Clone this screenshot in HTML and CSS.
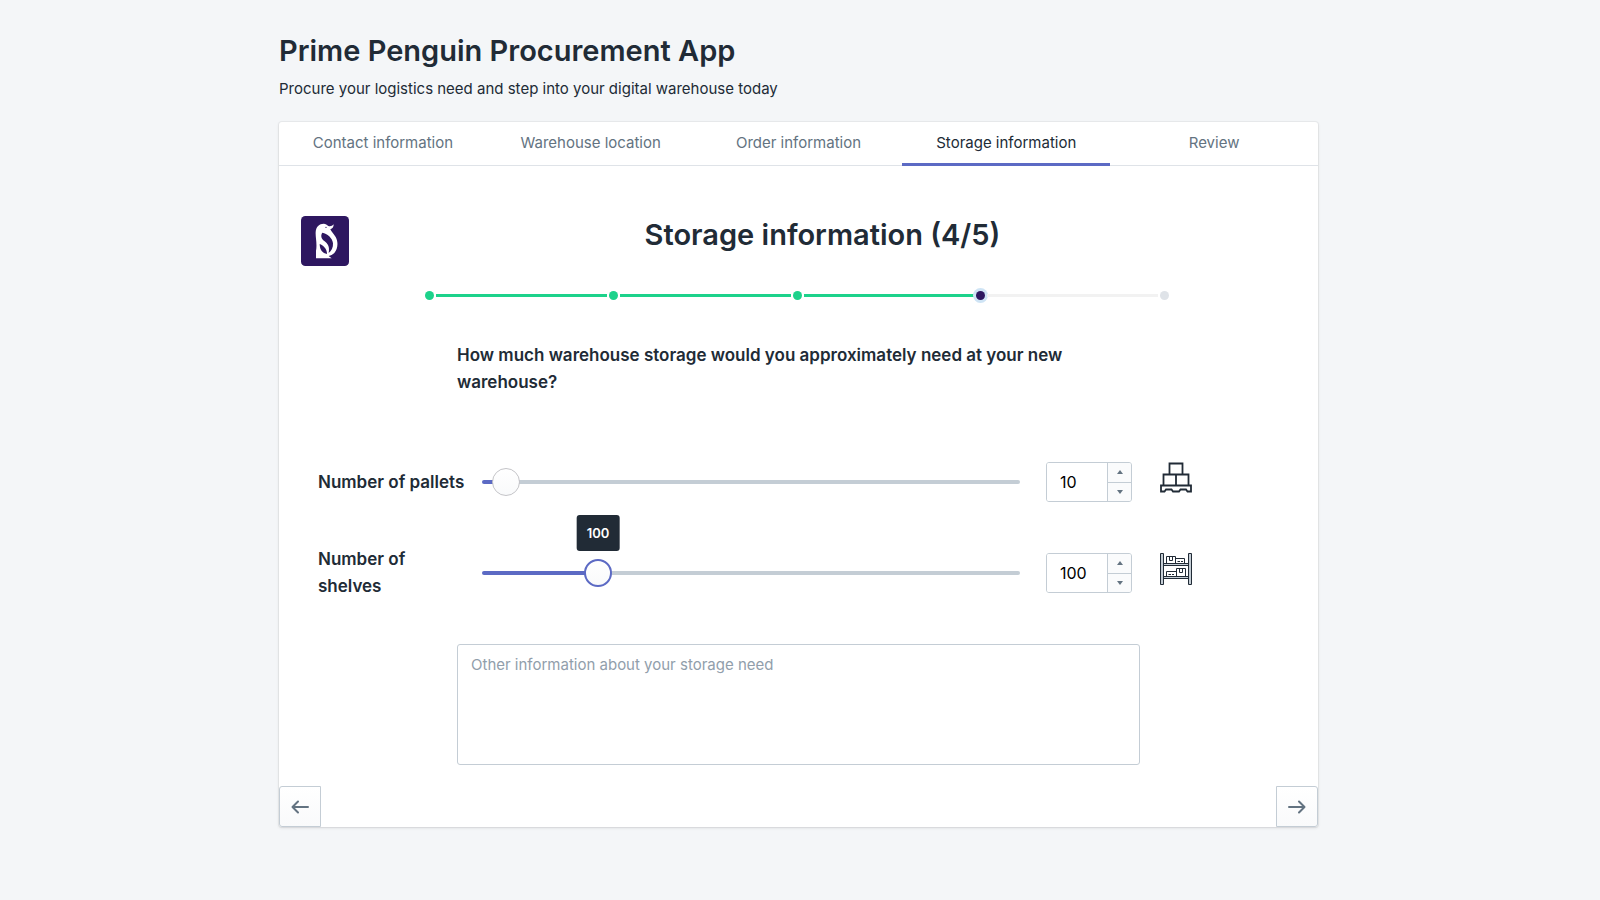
FILE: index.html
```html
<!DOCTYPE html>
<html lang="en">
<head>
<meta charset="utf-8">
<meta name="viewport" content="width=device-width, initial-scale=1">
<title>Prime Penguin Procurement App</title>
<link rel="stylesheet" href="styles.css">
</head>
<body>
<main class="page">
  <header class="page-header">
    <h1 class="page-title">Prime Penguin Procurement App</h1>
    <p class="page-subtitle">Procure your logistics need and step into your digital warehouse today</p>
  </header>

  <section class="card">
    <div class="tabs" role="tablist">
      <button class="tab" type="button" role="tab" aria-selected="false">Contact information</button>
      <button class="tab" type="button" role="tab" aria-selected="false">Warehouse location</button>
      <button class="tab" type="button" role="tab" aria-selected="false">Order information</button>
      <button class="tab tab-active" type="button" role="tab" aria-selected="true">Storage information</button>
      <button class="tab" type="button" role="tab" aria-selected="false">Review</button>
    </div>

    <form class="panel">
      <div class="panel-head">
        <svg class="logo" viewBox="0 0 144 150" aria-hidden="true">
          <rect width="144" height="150" rx="13" fill="#2e1760"/>
          <path fill="#fff" d="M45 127V105C49 82 43 64 44 48C45 32 55 23 68 23C74 23 78 26 82 30C88 32 94 30 98 25C98 33 95 37 88 40C91 48 98 53 104 63C113 79 110 100 100 111C95 116 89 119 83 120L92 127Z"/>
          <path fill="#2e1760" d="M64 50C78 52 95 66 96 82C97 95 91 105 83 111C87 92 80 82 70 75C61 69 58 58 64 50Z"/>
          <path fill="#2e1760" d="M56 84C66 88 78 98 78 114C65 112 56 102 56 84Z"/>
          <circle cx="75" cy="34" r="2" fill="#2e1760"/>
        </svg>
        <h2 class="panel-title">Storage information (4/5)</h2>
      </div>

      <div class="progress" role="img" aria-label="Step 4 of 5">
        <span class="dot dot-done"></span><span class="line line-done"></span>
        <span class="dot dot-done"></span><span class="line line-done"></span>
        <span class="dot dot-done"></span><span class="line line-done line-to-current"></span>
        <span class="dot dot-current"></span><span class="line"></span>
        <span class="dot"></span>
      </div>

      <p class="question">How much warehouse storage would you approximately need at your new warehouse?</p>

      <div class="rows">
        <div class="row">
          <label class="row-label" for="pallets">Number of pallets</label>
          <div class="slider" style="--value: 0.02">
            <input class="range" id="pallets" type="range" min="0" max="500" value="10">
          </div>
          <div class="stepper">
            <input class="stepper-input" type="number" value="10" aria-label="Pallets">
            <div class="stepper-buttons">
              <button class="step" type="button" aria-label="More pallets"><svg viewBox="0 0 8 4"><path d="M1 4L4 0L7 4Z"/></svg></button>
              <button class="step" type="button" aria-label="Fewer pallets"><svg viewBox="0 0 8 4"><path d="M1 0L4 4L7 0Z"/></svg></button>
            </div>
          </div>
          <svg class="row-icon" viewBox="0 0 32 32" aria-hidden="true">
            <g fill="none" stroke="#212b36" stroke-width="1.8">
              <path d="M9.500 12V1.500H22.500V12M3.500 23V12.500H28.500V23M16 12.500V23"/>
              <path d="M1 23.500H31V29.500H27.500L26 27.500H20.500L19 29.500H13L11.500 27.500H6L4.500 29.500H1Z"/>
            </g>
          </svg>
        </div>

        <div class="row">
          <label class="row-label" for="shelves">Number of shelves</label>
          <div class="slider" style="--value: 0.2">
            <input class="range range-active" id="shelves" type="range" min="0" max="500" value="100">
            <output class="tooltip" for="shelves">100</output>
          </div>
          <div class="stepper">
            <input class="stepper-input" type="number" value="100" aria-label="Shelves">
            <div class="stepper-buttons">
              <button class="step" type="button" aria-label="More shelves"><svg viewBox="0 0 8 4"><path d="M1 4L4 0L7 4Z"/></svg></button>
              <button class="step" type="button" aria-label="Fewer shelves"><svg viewBox="0 0 8 4"><path d="M1 0L4 4L7 0Z"/></svg></button>
            </div>
          </div>
          <svg class="row-icon" viewBox="0 0 32 32" aria-hidden="true">
            <g fill="#c4cdd5" stroke="#212b36" stroke-width="1">
              <path d="M3.500 10.500H28.500V12.500H3.500ZM3.500 23.500H28.500V25.500H3.500Z"/>
              <path d="M0.500 0.500H3.500V31.500H0.500ZM28.500 0.500H31.500V31.500H28.500Z"/>
            </g>
            <g fill="none" stroke="#212b36" stroke-width="1">
              <path d="M6.500 10.500V3.500H15.500V10.500M9.500 3.500V7.500H12.500V3.500M15.500 5.500H24.500V10.500"/>
              <path d="M17.500 8.500H20M21 8.500H23M8.500 21.500H11M12 21.500H14"/>
              <path d="M6.500 23.500V18.500H16.500M16.500 23.500V15.500H25.500V23.500M19.500 15.500V19.500H22.500V15.500"/>
            </g>
          </svg>
        </div>
      </div>

      <textarea class="notes" placeholder="Other information about your storage need" aria-label="Other information about your storage need"></textarea>

      <div class="nav">
        <button class="nav-button nav-back" type="button" aria-label="Previous step">
          <svg viewBox="0 0 20 20"><path d="M18 10H3M8 4.500L2.500 10L8 15.500"/></svg>
        </button>
        <button class="nav-button nav-next" type="button" aria-label="Next step">
          <svg viewBox="0 0 20 20"><path d="M2 10H17M12 4.500L17.500 10L12 15.500"/></svg>
        </button>
      </div>
    </form>
  </section>
</main>
</body>
</html>
```
FILE: styles.css
```css
* {
  box-sizing: border-box;
}

body {
  margin: 0;
  padding: 33px 24px 32px 21px;
  background: #f4f6f8;
  color: #212b36;
  font-family: Inter, "Noto Sans", sans-serif;
  font-size: 15px;
}

button,
input,
textarea {
  font: inherit;
  color: inherit;
}

.page {
  max-width: 1039px;
  margin: 0 auto;
}

.page-header {
  margin-bottom: 21px;
}

.page-title,
.panel-title {
  margin: 0;
  font-size: 29px;
  font-weight: 600;
  line-height: 36px;
}

.page-subtitle {
  margin: 8px 0 0;
  line-height: 24px;
}

.card {
  background: #fff;
  border-radius: 3px;
  box-shadow: 0 0 0 1px rgba(63, 63, 68, 0.05), 0 1px 3px rgba(63, 63, 68, 0.15);
}

.tabs {
  display: grid;
  grid-template-columns: repeat(5, 1fr);
  border-bottom: 1px solid #dfe3e8;
}

.tab {
  height: 44px;
  margin-bottom: -1px;
  padding: 0;
  border: 0;
  border-bottom: 3px solid transparent;
  background: none;
  color: #637381;
}

.tab-active {
  border-color: #5c6ac4;
  color: #212b36;
}

.panel-head {
  display: grid;
  grid-template-columns: 48px 1fr;
  padding: 50px 22px 0;
}

.logo {
  width: 48px;
  height: 50px;
}

.panel-title {
  line-height: 38px;
  text-align: center;
}

.progress {
  display: grid;
  grid-template-columns: 9px 1fr 9px 1fr 9px 1fr 9px 1fr 9px;
  align-items: center;
  margin: 25px 149px 0 146px;
}

.dot {
  height: 9px;
  border-radius: 50%;
  background: #dfe3e8;
}

.dot-done {
  background: #1dd28b;
}

.dot-current {
  background: #2e1760;
  box-shadow: 0 0 0 3px #cfe4f5;
}

.line {
  height: 3px;
  margin: 0 2px;
  background: #f2f2f2;
}

.line-done {
  background: #1dd28b;
}

.line-to-current {
  margin-right: 0;
}

.question {
  margin: 42px 178px 0;
  font-size: 17px;
  font-weight: 600;
  line-height: 27px;
}

.rows {
  display: grid;
  gap: 37px;
  margin: 59px 126px 0 39px;
}

.row {
  display: grid;
  grid-template-columns: 164px 1fr 86px 60px;
  align-items: center;
  min-height: 54px;
}

.row-label {
  padding-right: 15px;
  font-size: 17px;
  font-weight: 600;
  line-height: 27px;
}

.slider {
  position: relative;
  display: flex;
  margin-right: 26px;
}

.range {
  width: 100%;
  height: 28px;
  margin: 0;
  background: none;
  appearance: none;
}

.range::-webkit-slider-runnable-track {
  height: 4px;
  border-radius: 2px;
  background: linear-gradient(#5c6ac4, #5c6ac4) 0 0 / calc(14px + (100% - 28px) * var(--value)) 100% no-repeat #c4cdd5;
}

.range::-webkit-slider-thumb {
  width: 28px;
  height: 28px;
  margin-top: -12px;
  border: 1px solid #c4c4c8;
  border-radius: 50%;
  background: linear-gradient(#fff, #f9fafb);
  appearance: none;
}

.range-active::-webkit-slider-thumb {
  border: 2px solid #5c6ac4;
}

.tooltip {
  position: absolute;
  bottom: 36px;
  left: calc(14px + (100% - 28px) * var(--value));
  padding: 8px 10px;
  transform: translateX(-50%);
  border-radius: 3px;
  background: #212b36;
  color: #fff;
  font-size: 13px;
  font-weight: 600;
  line-height: 20px;
}

.stepper {
  display: flex;
  height: 40px;
  overflow: hidden;
  border: 1px solid #c4cdd5;
  border-radius: 3px;
}

.stepper-input {
  flex: 1;
  min-width: 0;
  padding: 0 0 0 13px;
  border: 0;
  background: #fff;
  color: #000;
  font-size: 16px;
  appearance: textfield;
}

.stepper-input::-webkit-inner-spin-button {
  appearance: none;
}

.stepper-buttons {
  display: grid;
  width: 24px;
  border-left: 1px solid #c4cdd5;
}

.step {
  display: grid;
  place-items: center;
  padding: 0;
  border: 0;
  background: #fafbfc;
}

.step + .step {
  border-top: 1px solid #c4cdd5;
}

.step svg {
  width: 8px;
  height: 4px;
  fill: #637381;
}

.row-icon {
  width: 32px;
  height: 32px;
  margin: 0 0 8px 28px;
}

.notes {
  display: block;
  width: calc(100% - 356px);
  height: 121px;
  margin: 44px 178px 0;
  padding: 9px 13px;
  border: 1px solid #c4cdd5;
  border-radius: 3px;
  line-height: 22px;
  resize: none;
}

.notes::placeholder {
  color: #919eab;
}

.nav {
  display: flex;
  justify-content: space-between;
  margin-top: 21px;
}

.nav-button {
  display: grid;
  place-items: center;
  width: 42px;
  height: 41px;
  padding: 0;
  border: 1px solid #c4cdd5;
  background: linear-gradient(#fff, #f9fafb);
}

.nav-back {
  border-radius: 3px 0 0 3px;
}

.nav-next {
  border-radius: 0 3px 3px 0;
}

.nav-button svg {
  width: 20px;
  height: 20px;
  fill: none;
  stroke: #637381;
  stroke-width: 2;
  stroke-linecap: round;
  stroke-linejoin: round;
}
```
